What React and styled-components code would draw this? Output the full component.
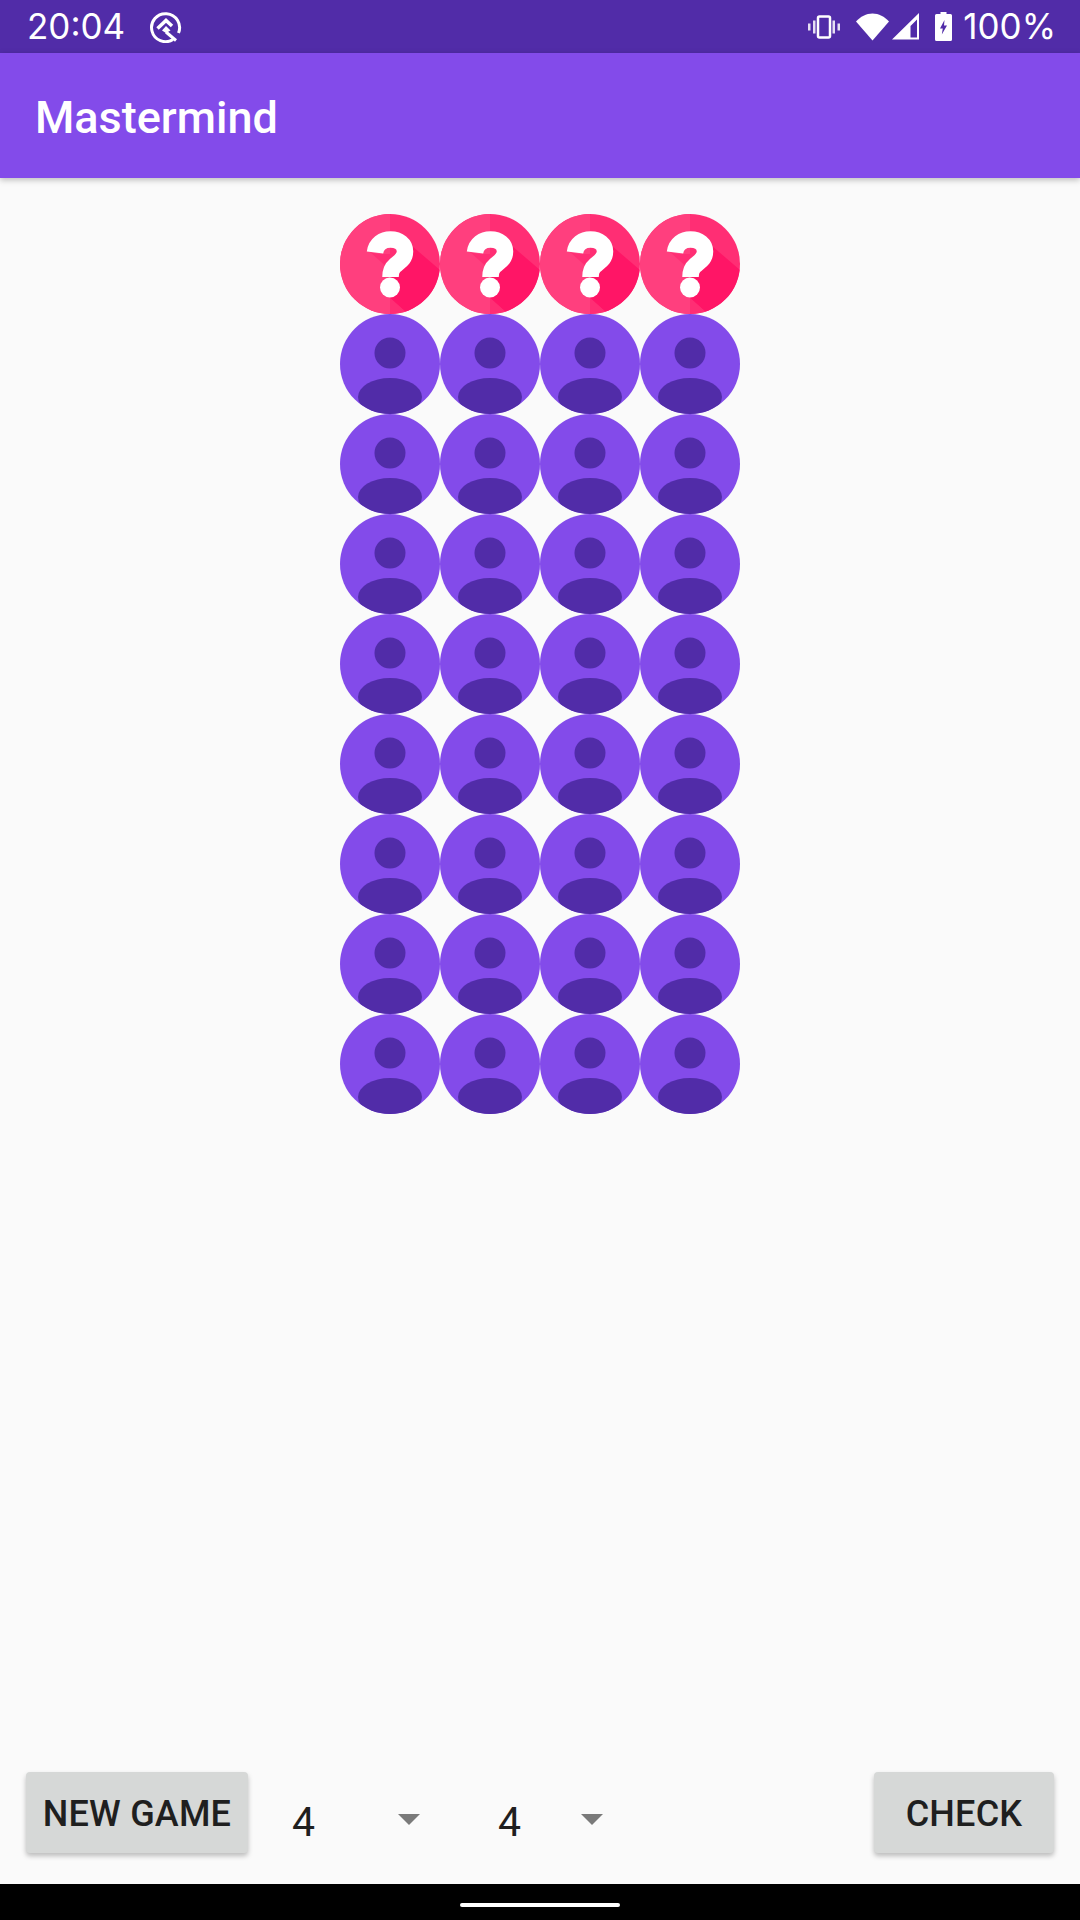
import React from 'react';
import styled, { createGlobalStyle } from 'styled-components';

const colors = {
  purple: '#834bea',
  dark: '#512ca8',
  page: '#fafafa',
  button: '#d6d8d7',
  text: '#1f1f1f',
  arrow: '#7a7a7a',
};

const GlobalStyle = createGlobalStyle`
  html, body {
    margin: 0;
    padding: 0;
    background: ${colors.page};
    font-family: Roboto, "Liberation Sans", sans-serif;
  }
`;

const Page = styled.div`
  width: 1080px;
  height: 1920px;
  display: flex;
  flex-direction: column;
  overflow: hidden;
  background: ${colors.page};
`;
const StatusBar = styled.div`
  height: 53px;
  flex: none;
  display: flex;
  align-items: center;
  justify-content: space-between;
  padding: 0 24px 0 27px;
  background: ${colors.dark};
  color: #fff;
  font-family: Inter, Roboto, sans-serif;
  font-size: 35px;
  line-height: 53px;
`;
const StatusGroup = styled.div`
  display: flex;
  align-items: center;
`;
const Clock = styled.span`
  width: 123px;
`;
const StatusIcon = styled.svg`
  display: block;
  flex: none;
  margin-right: ${p => p.$gap || 0}px;
  fill: #fff;
`;
const AppBar = styled.header`
  position: relative;
  z-index: 1;
  height: 125px;
  flex: none;
  box-sizing: border-box;
  display: flex;
  align-items: center;
  padding: 3px 0 0 35px;
  background: ${colors.purple};
  color: #fff;
  font-size: 45px;
  font-weight: 500;
  box-shadow: 0 2px 6px rgba(0, 0, 0, 0.25);
`;
const Main = styled.main`
  flex: 1;
  padding-top: 36px;
`;
const Board = styled.div`
  width: 400px;
  margin: 0 auto;
  display: grid;
  grid-template-columns: repeat(4, 100px);
  grid-auto-rows: 100px;
`;
const PegIcon = styled.svg`
  display: block;
  width: 100px;
  height: 100px;
  filter: blur(0.7px);
`;
const Controls = styled.div`
  flex: none;
  display: flex;
  align-items: flex-start;
  padding: 0 26px 31px;
`;
const Button = styled.button`
  flex: none;
  width: ${p => p.$width}px;
  height: 81px;
  margin-left: ${p => (p.$end ? 'auto' : '0')};
  padding: 3px 0 0;
  border: 0;
  border-radius: 4px;
  background: ${colors.button};
  color: ${colors.text};
  font-family: Roboto, sans-serif;
  font-size: 36px;
  font-weight: 500;
  letter-spacing: 0.2px;
  box-shadow: 0 3px 5px rgba(0, 0, 0, 0.25);
`;
const Spinner = styled.div`
  flex: none;
  display: flex;
  align-items: center;
  height: 81px;
  margin-left: ${p => p.$left}px;
  padding-top: 19px;
  box-sizing: border-box;
  color: ${colors.text};
  font-size: 41px;
`;
const SpinnerValue = styled.span`
  width: ${p => p.$width}px;
`;
const SpinnerArrow = styled.span`
  width: 0;
  height: 0;
  margin-top: -5px;
  border-left: 11px solid transparent;
  border-right: 11px solid transparent;
  border-top: 11px solid ${colors.arrow};
`;
const NavBar = styled.div`
  height: 36px;
  flex: none;
  display: flex;
  justify-content: center;
  padding-top: 19px;
  box-sizing: border-box;
  background: #000;
`;
const HomePill = styled.div`
  width: 160px;
  height: 4px;
  border-radius: 2px;
  background: #fff;
`;

const PERSON_ROWS = 8;
const COLUMNS = 4;

const QuestionPeg = ({ id }) => (
  <PegIcon viewBox="0 0 100 100">
    <clipPath id={id}>
      <circle cx="50" cy="50" r="50" />
    </clipPath>
    <g clipPath={`url(#${id})`}>
      <rect width="100" height="100" fill="#ff2e74" />
      <path d="M72 32L100 56V100H68L48 82V50Z" fill="#ff1566" />
      <rect width="50" height="100" fill="#ff3f7e" />
      <path d="M50 84L68 100H50ZM30 38L50 56V40H38Z" fill="#ff2e74" />
    </g>
    <path
      d="M35 38.500C36 30 43 25.500 50.500 25.500C59 25.500 65 30.500 65 37.500C65 45 59.500 47.500 55 51.500C52 54 50.500 57 50.500 63"
      fill="none"
      stroke="#fff"
      strokeWidth="16.500"
    />
    <circle cx="50" cy="73.500" r="10" fill="#fff" />
  </PegIcon>
);

const PersonPeg = ({ id }) => (
  <PegIcon viewBox="0 0 100 100">
    <clipPath id={id}>
      <circle cx="50" cy="50" r="50" />
    </clipPath>
    <circle cx="50" cy="50" r="50" fill={colors.purple} />
    <circle cx="50" cy="39" r="15.500" fill={colors.dark} />
    <ellipse cx="50" cy="83" rx="32" ry="19" fill={colors.dark} clipPath={`url(#${id})`} />
  </PegIcon>
);

const App = () => {
  const hidden = Array.from({ length: COLUMNS }, (_, i) => i);
  const guesses = Array.from({ length: PERSON_ROWS * COLUMNS }, (_, i) => i);

  return (
    <Page>
      <GlobalStyle />
      <StatusBar>
        <StatusGroup>
          <Clock>20:04</Clock>
          <StatusIcon width="32" height="32" viewBox="0 0 32 32">
            <path
              d="M23 28.500A14 14 0 1 1 28.500 22"
              fill="none"
              stroke="#fff"
              strokeWidth="3"
            />
            <path d="M7.500 17.500L16 9.500L22 15" fill="none" stroke="#fff" strokeWidth="3.500" />
            <path d="M16 21L26 29.500" fill="none" stroke="#fff" strokeWidth="3" />
            <path d="M16 15L20.500 19.500L16 22L12 19.500Z" />
          </StatusIcon>
        </StatusGroup>
        <StatusGroup>
          <StatusIcon $gap={16} width="32" height="24" viewBox="0 0 32 24">
            <rect x="10" y="1.500" width="12" height="21" rx="1.500" fill="none" stroke="#fff" strokeWidth="2.500" />
            <rect x="5" y="5.500" width="2.500" height="13" opacity="0.85" />
            <rect x="24.500" y="5.500" width="2.500" height="13" opacity="0.85" />
            <rect x="0" y="8.500" width="2.500" height="7" opacity="0.85" />
            <rect x="29.500" y="8.500" width="2.500" height="7" opacity="0.85" />
          </StatusIcon>
          <StatusIcon $gap={3} width="33" height="28" viewBox="0 0 33 28">
            <path d="M16.500 27.500L0 8.500C4.500 3.500 10.200 0.500 16.500 0.500C22.800 0.500 28.500 3.500 33 8.500Z" />
          </StatusIcon>
          <StatusIcon $gap={16} width="27" height="27" viewBox="0 0 27 27">
            <path fillRule="evenodd" d="M0 26.500L27 0V26.500ZM18.500 24.500H25V6.500L18.500 13Z" />
          </StatusIcon>
          <StatusIcon $gap={11} width="17" height="29" viewBox="0 0 17 29">
            <path
              fillRule="evenodd"
              d="M5.500 0H11.500V2H15.500Q17 2 17 3.500V27.500Q17 29 15.500 29H1.500Q0 29 0 27.500V3.500Q0 2 1.500 2H5.500ZM9.500 8L5 16.500H7.800L6.800 22.500L12 13.500H9Z"
            />
          </StatusIcon>
          <span>100%</span>
        </StatusGroup>
      </StatusBar>
      <AppBar>Mastermind</AppBar>
      <Main>
        <Board>
          {hidden.map(i => (
            <QuestionPeg key={i} id={`hidden-${i}`} />
          ))}
          {guesses.map(i => (
            <PersonPeg key={i} id={`guess-${i}`} />
          ))}
        </Board>
      </Main>
      <Controls>
        <Button $width={222}>NEW GAME</Button>
        <Spinner $left={44}>
          <SpinnerValue $width={106}>4</SpinnerValue>
          <SpinnerArrow />
        </Spinner>
        <Spinner $left={78}>
          <SpinnerValue $width={83}>4</SpinnerValue>
          <SpinnerArrow />
        </Spinner>
        <Button $end $width={180}>CHECK</Button>
      </Controls>
      <NavBar>
        <HomePill />
      </NavBar>
    </Page>
  );
};

export default App;
